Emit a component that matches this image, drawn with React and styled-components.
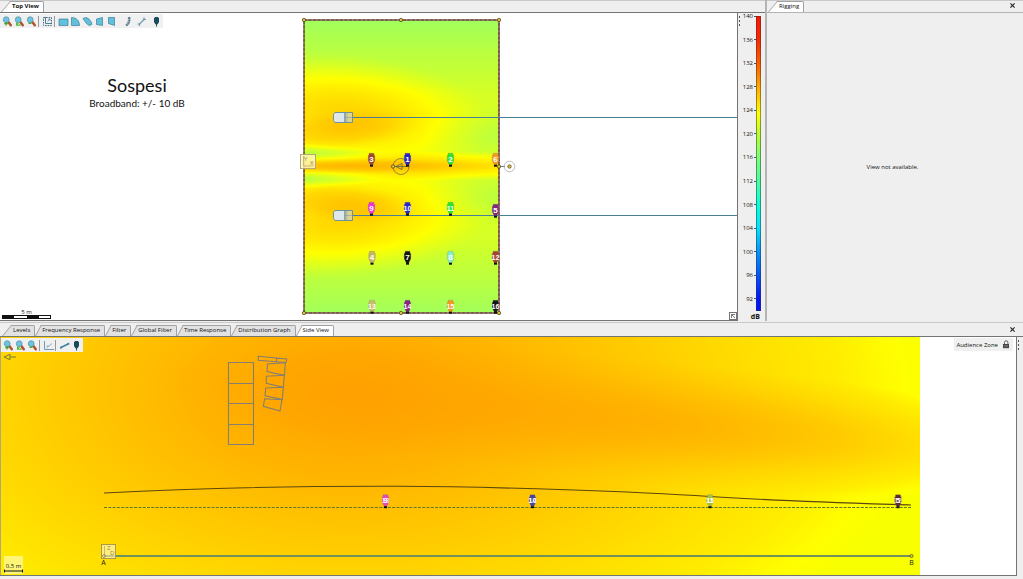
import React from "react";
import styled, { createGlobalStyle, css } from "styled-components";

const GlobalStyle = createGlobalStyle`
  * { box-sizing: border-box; }
  body {
    margin: 0;
    background: #efefef;
    color: #111;
    font-family: "Open Sans", "Noto Sans", sans-serif;
    font-size: 6px;
  }
  button { font: inherit; color: inherit; padding: 0; border: 0; background: none; }
`;

const Page = styled.div`
  display: flex;
  flex-direction: column;
  min-height: 100vh;
`;

const UpperRow = styled.div`
  display: grid;
  grid-template-columns: minmax(0, 1fr) 256px;
`;

const Panel = styled.section`
  display: flex;
  flex-direction: column;
  min-width: 0;
`;

const LeftPanel = styled(Panel)`
  border-right: 2px solid #b4b4b4;
`;

const TabStrip = styled.header`
  display: flex;
  align-items: flex-end;
  height: ${(p) => (p.$tall ? 15 : 13)}px;
  padding-left: ${(p) => (p.$tall ? 2 : 1)}px;
  border-top: 1px solid #c9c9c9;
  border-bottom: ${(p) => (p.$soft ? "1px solid #b4b4b4" : "1px solid #747474")};
  background: #efefef;
`;

const TabButton = styled.button`
  position: relative;
  isolation: isolate;
  height: 11px;
  padding: 0 5px 1px ${(p) => (p.$first ? 11 : 7)}px;
  line-height: 8px;
  white-space: nowrap;
  font-weight: ${(p) => (p.$bold ? 700 : 400)};
  &::before, &::after {
    content: "";
    position: absolute;
    z-index: -1;
    top: 0;
    bottom: 0;
    border-top: 1px solid #a2a2a2;
    background: ${(p) => (p.$active ? "#fff" : "#e2e2e2")};
  }
  &::before {
    left: 0;
    width: 50%;
    border-left: 1px solid #a2a2a2;
    transform: skewX(${(p) => (p.$first ? -40 : -28)}deg);
    transform-origin: left bottom;
  }
  &::after {
    left: 45%;
    right: 0;
    border-right: 1px solid #a2a2a2;
    border-top-right-radius: 2px;
  }
`;

const CloseButton = styled.button`
  display: flex;
  align-items: center;
  justify-content: center;
  width: 11px;
  height: 13px;
  margin: 0 5px 0 auto;
`;

const PlotRow = styled.div`
  display: flex;
  position: relative;
`;

const PlotArea = styled.div`
  position: relative;
  flex: 1;
  min-width: 0;
  background: #fff;
  border-right: 1px solid #747474;
  border-bottom: 1px solid #747474;
`;

const Plot = styled.svg`
  display: block;
  width: 100%;
  height: auto;
  font-family: "Open Sans", "Noto Sans", sans-serif;
`;

const Toolbar = styled.div`
  position: absolute;
  top: 1px;
  left: ${(p) => (p.$inset ? 1 : 0)}px;
  display: flex;
  align-items: center;
  height: 14px;
  padding: 0 1px;
  background: #f0f0f0;
`;

const ToolButton = styled.button`
  display: flex;
  align-items: center;
  justify-content: center;
  width: 12px;
  height: 13px;
  ${(p) => p.$gap && css`margin-left: ${p.$gap}px;`}
`;

const Divider = styled.span`
  width: 1px;
  height: 11px;
  margin: 0 2px 0 1px;
  background: #9a9a9a;
`;

const ScalePanel = styled.aside`
  position: relative;
  display: flex;
  flex-direction: column;
  width: 27px;
`;

const ScaleBody = styled.div`
  display: flex;
  flex: 1;
  min-height: 0;
`;

const ScaleLabels = styled.ul`
  display: flex;
  flex-direction: column;
  justify-content: space-between;
  width: 18px;
  height: calc(100% - 9px);
  margin: 0;
  padding: 0;
  list-style: none;
`;

const ScaleLabel = styled.li`
  display: flex;
  align-items: center;
  justify-content: flex-end;
  gap: 1px;
  height: 6px;
  line-height: 6px;
  &::after {
    content: "";
    width: 2px;
    height: 1px;
    background: #555;
  }
`;

const ScaleBar = styled.div`
  width: 5px;
  margin-top: 3px;
  border: 1px solid rgba(60, 50, 50, 0.5);
  background: linear-gradient(
    #ff1400 0%, #ff2800 8%, #ff6400 17%, #ffaa00 24%, #ffff00 33%,
    #b4ff32 40%, #78ff78 48%, #46ffa0 56%, #00ffe1 65%,
    #00e1ff 72%, #0096ff 80%, #0055ff 88%, #0014ff 96%
  ) border-box;
`;

const ScaleUnit = styled.div`
  height: 10px;
  padding-right: 5px;
  line-height: 11px;
  text-align: right;
  font-size: 7px;
  font-weight: 700;
`;

const Grip = styled.span`
  position: absolute;
  top: 3px;
  left: 1px;
  width: 1px;
  height: 10px;
  background: repeating-linear-gradient(#555 0 2px, transparent 2px 4px);
`;

const Caption = styled.div`
  position: absolute;
  top: 61px;
  left: 57px;
  width: 160px;
  text-align: center;
  color: #111;
  font-family: Lato, "Open Sans", sans-serif;
`;

const CaptionTitle = styled.h1`
  margin: 0;
  font-size: 18px;
  font-weight: 400;
  line-height: 22px;
`;

const CaptionNote = styled.p`
  margin: 0;
  font-size: 10px;
  line-height: 14px;
`;

const ExpandButton = styled.button`
  position: absolute;
  right: 0;
  bottom: 0;
  display: flex;
  align-items: center;
  justify-content: center;
  width: 8px;
  height: 8px;
  border: 1px solid #747474;
  background: #fff;
`;

const EmptyMessage = styled.p`
  display: flex;
  flex: 1;
  align-items: center;
  justify-content: center;
  margin: 0;
  padding-right: 5px;
`;

const LowerPanel = styled(Panel)`
  margin-top: 1px;
`;

const SideRow = styled(PlotRow)`
  padding-right: 6px;
`;

const SideGrip = styled(Grip)`
  left: auto;
  right: 4px;
`;

const ZoneBadge = styled.div`
  position: absolute;
  top: 1px;
  right: 3px;
  display: flex;
  align-items: center;
  gap: 4px;
  height: 13px;
  padding: 0 3px 0 2px;
  background: #f0f0f0;
`;

const LockButton = styled.button`
  display: flex;
  width: 8px;
`;

const Close = () => (
  <CloseButton aria-label="Close">
    <svg width="5" height="5" viewBox="0 0 5 5" stroke="#222" strokeWidth="1.1">
      <path d="M.4 .4 4.6 4.6M4.6 .4 .4 4.6" />
    </svg>
  </CloseButton>
);

const Magnifier = ({ sign }) => (
  <>
    <path d="M6.2 5.800 8.800 9.300" stroke="#b5502a" strokeWidth="2.400" strokeLinecap="round" />
    <circle cx="4.200" cy="3.700" r="2.900" fill="#6cc4e4" stroke="#5d93a3" strokeWidth=".8" />
    {sign === "in" && <path d="M4 6v3.500M2.300 7.700h3.500" stroke="#38a51d" strokeWidth="1.200" />}
    {sign === "fit" && <path d="M2.500 6.500v2.800H6V8M2.500 9 4.500 7" stroke="#57b93a" strokeWidth="1.100" fill="none" />}
    {sign === "out" && <path d="M2.500 7.300h3" stroke="#38a51d" strokeWidth="1.200" />}
  </>
);

const shape = { fill: "#62c0dc", stroke: "#3b7f9b", strokeWidth: 0.7 };
const ICONS = {
  zoomIn: <Magnifier sign="in" />,
  zoomFit: <Magnifier sign="fit" />,
  zoomOut: <Magnifier sign="out" />,
  frame: (
    <g fill="none" stroke="#3f6f8c">
      <rect x="1.500" y="1.500" width="8" height="8" strokeDasharray="1.6 1" />
      <path d="M3.500 1v6.500H10" strokeWidth=".9" />
      <path d="M5.500 5.500 8 3M6.300 3H8v1.700" strokeWidth=".7" />
    </g>
  ),
  rect: <path d="M1 3h9v6.500H1z" {...shape} />,
  sector: <path d="M1.500 1.500c5 0 8 3.500 8 8h-8z" {...shape} />,
  arc: <path d="M1 2.500Q4.500 0 7.500 3.500T9.800 8.500Q7 10.800 4.500 7.500T1 2.500z" {...shape} />,
  trapLeft: <path d="M2.500 3 8.500 1.500v8L2.500 8.500z" {...shape} />,
  trapRight: <path d="M2.500 1.500h6v8L2.500 7.500z" {...shape} />,
  array: (
    <g>
      <path d="M6.800 1C7.300 4.500 6.500 7.500 4 9.500" stroke="#6b8796" strokeWidth="2" fill="none" strokeDasharray="2 .5" />
      <path d="M7.900 1C8.300 5 7.300 8 5 10" stroke="#39596c" strokeWidth=".7" fill="none" />
    </g>
  ),
  measure: (
    <g stroke="#6b9db7" fill="none">
      <path d="M3 8.500 8.500 3" strokeWidth="1.300" />
      <path d="M1.500 8h2v2M8 1.500v2h2" strokeWidth="1.200" />
    </g>
  ),
  line: (
    <g stroke="#427f9d" fill="#427f9d">
      <path d="M2 7.500 9 4" strokeWidth="1.400" />
      <circle cx="2" cy="7.700" r="1.100" stroke="none" />
      <circle cx="9.300" cy="3.800" r="1.100" stroke="none" />
    </g>
  ),
  axes: (
    <g stroke="#6f9db4" fill="none">
      <path d="M1.500 1v8.500H11" />
      <path d="M3.500 8 9 3.500M3.500 6h2" strokeWidth=".8" />
    </g>
  ),
  mic: (
    <g fill="#164c5e">
      <path d="M3.700 1h3.600v1h.7v4L6.600 8.300H4.400L3 6V2h.7z" />
      <path d="M5 8h1v2.500H5z" />
    </g>
  ),
};

const Tool = ({ icon, label, gap }) => (
  <ToolButton aria-label={label} title={label} $gap={gap}>
    <svg width="11" height="11" viewBox="0 0 11 11">{ICONS[icon]}</svg>
  </ToolButton>
);

const ZoomTools = () => (
  <>
    <Tool icon="zoomIn" label="Zoom in" />
    <Tool icon="zoomFit" label="Zoom to fit" />
    <Tool icon="zoomOut" label="Zoom out" />
  </>
);

const MICS = [
  ["3", 371.5, 166, "#a5462b"], ["1", 407.5, 166, "#2727c8"], ["2", 450.5, 166, "#2de52d"], ["6", 495.5, 166, "#f59a1e"],
  ["9", 371.5, 215, "#f034d4"], ["10", 407.5, 215, "#2727c8"], ["11", 450.5, 215, "#2de52d"], ["5", 495.5, 217, "#84257f"],
  ["4", 372, 264, "#c4b568"], ["7", 407.5, 264, "#151515"], ["8", 450.5, 264, "#85f0c4"], ["12", 495.5, 264, "#a5462b"],
  ["13", 372, 313, "#c9bc6c"], ["14", 407.5, 313, "#84257f"], ["15", 450.5, 313, "#f59a1e"], ["16", 495.5, 313, "#151515"],
];

const SIDE_MICS = [
  ["9", 385.5, "#e447b8", "13"],
  ["10", 532.5, "#4b41a0", "14"],
  ["11", 710, "#a5c43a", "15"],
  ["5", 898, "#5d2b35", "12"],
];

const Mic = ({ x, y, fill, label, overlay }) => (
  <g transform={`translate(${x} ${y})`}>
    <path d="M-2.500-12.800h5v2h.8v5.500L1.300-1h-2.600L-3.300-5.300v-5.500h.8z" fill={fill} stroke="#777" strokeOpacity=".4" strokeWidth=".6" />
    <path d="M-1.500-1.300h3v2h-3z" fill="#111" />
    <text y="-4.500" textAnchor="middle" fontFamily="Liberation Sans, sans-serif" fontSize={label.length > 1 ? 7 : 8} fontWeight="700" fill="#fff">{label}</text>
    {overlay && <text y="-4.500" textAnchor="middle" fontFamily="Liberation Sans, sans-serif" fontSize="7" fontWeight="700" fill="#fff" opacity=".7">{overlay}</text>}
  </g>
);

const Handle = ({ x, y }) => <circle cx={x} cy={y} r="1.700" fill="#d8c63a" stroke="#5a4a24" strokeWidth=".8" />;

const Glow = ({ id, cx, cy, rx, ry, turn = 0 }) => (
  <ellipse cx={cx} cy={cy} rx={rx} ry={ry} fill={`url(#${id})`} transform={`rotate(${turn} ${cx} ${cy})`} />
);

const Falloff = ({ id, stops, color = "#fff" }) => (
  <radialGradient id={id}>
    {stops.map(([o, a]) => <stop key={o} offset={o} stopColor={color} stopOpacity={a} />)}
  </radialGradient>
);

// Level fields are painted in grey and mapped to the dB colour scale by a transfer filter.
const TopPlot = () => (
  <Plot viewBox="0 13 737 307" role="img" aria-label="Top view level map">
    <defs>
      <filter id="topScale" x="0" y="0" width="1" height="1" colorInterpolationFilters="sRGB">
        <feComponentTransfer>
          <feFuncR type="table" tableValues=".6 .76 1 1 1" />
          <feFuncG type="table" tableValues="1 1 1 .84 .66" />
          <feFuncB type="table" tableValues=".4 .22 0 0 0" />
        </feComponentTransfer>
      </filter>
      <clipPath id="topClip"><rect x="304" y="20" width="195" height="293" /></clipPath>
      <linearGradient id="topBase" x2="0" y2="1">
        <stop offset="0" stopColor="#0c0c0c" />
        <stop offset=".12" stopColor="#383838" />
        <stop offset=".25" stopColor="#545454" />
        <stop offset=".5" stopColor="#5c5c5c" />
        <stop offset=".75" stopColor="#545454" />
        <stop offset=".88" stopColor="#383838" />
        <stop offset="1" stopColor="#101010" />
      </linearGradient>
      <Falloff id="blob" stops={[[0, 0.64], [0.2, 0.57], [0.4, 0.44], [0.6, 0.28], [0.75, 0.16], [0.88, 0.07], [1, 0]]} />
      <Falloff id="core" stops={[[0, 0.48], [0.5, 0.34], [0.8, 0.1], [1, 0]]} />
      <Falloff id="stripe" stops={[[0, 0.75], [0.4, 0.55], [1, 0]]} />
      <Falloff id="stripeWide" stops={[[0, 0.5], [0.5, 0.38], [1, 0]]} />
      <Falloff id="dip" color="#000" stops={[[0, 0.55], [0.5, 0.32], [0.8, 0.1], [1, 0]]} />
      <Falloff id="dipSoft" color="#000" stops={[[0, 0.36], [0.5, 0.16], [1, 0]]} />
    </defs>
    <g clipPath="url(#topClip)">
      <g filter="url(#topScale)">
        <rect x="304" y="20" width="195" height="293" fill="url(#topBase)" />
        <Glow id="blob" cx={345} cy={114} rx={150} ry={60} turn={5} />
        <Glow id="blob" cx={345} cy={218} rx={150} ry={60} turn={-5} />
        <Glow id="core" cx={345} cy={129} rx={80} ry={20} turn={-6} />
        <Glow id="core" cx={345} cy={203} rx={80} ry={20} turn={6} />
        <Glow id="dip" cx={300} cy={154} rx={105} ry={11} turn={2} />
        <Glow id="dip" cx={300} cy={178} rx={105} ry={11} turn={-2} />
        <Glow id="dipSoft" cx={499} cy={136} rx={80} ry={30} />
        <Glow id="dipSoft" cx={499} cy={197} rx={80} ry={30} />
        <Glow id="stripeWide" cx={420} cy={166} rx={200} ry={15} />
        <Glow id="stripe" cx={350} cy={166} rx={170} ry={8} />
      </g>
    </g>
    <path d="M304 20V313" stroke="#7a3c2c" strokeWidth="1.200" />
    <path d="M304 20H499V313H304" fill="none" stroke="#8c5a55" strokeWidth="1.600" />
    <path d="M304 20H499V313H304z" fill="none" stroke="#4b3030" strokeWidth=".8" strokeDasharray="3 1.500" />
    <path d="M352 117.500H737M352 215.500H737" stroke="#4a7f96" strokeWidth="1.200" />
    {[112, 210].map((y) => (
      <g key={y} stroke="#5b8ca5" strokeWidth=".9">
        <path d={`M335 ${y + 0.5}h10v10h-10l-1.500-2v-6z`} fill="#dfe7ea" />
        <path d={`M345 ${y + 0.5}h7.500v10H345z`} fill="#d3d6c0" fillOpacity=".75" />
        <path d={`M347 ${y + 0.5}v10M345 ${y + 5.5}h7`} strokeWidth=".4" />
      </g>
    ))}
    <g>
      <rect x="300.500" y="154.500" width="15" height="14" fill="#fff6b0" fillOpacity=".85" stroke="#b3a878" />
      <path d="M303.500 156v10h10" fill="none" stroke="#b49f80" strokeWidth=".7" />
      <text x="304" y="161" fontSize="6" fill="#8d8464">Y</text>
      <text x="310" y="165" fontSize="6" fill="#8d8464">X</text>
    </g>
    <g fill="none" stroke="#7d7040" strokeWidth=".8">
      <circle cx="401" cy="166.500" r="8" />
      <path d="M393 166.500h14M402 163.500l-6 3 6 3z" stroke="#4e6a4c" />
      <path d="M499 166.500h6" stroke="#555" />
      <circle cx="509.500" cy="166.500" r="5.300" stroke="#aaa" />
    </g>
    {MICS.map(([label, x, y, fill]) => <Mic key={label} {...{ label, x, y, fill }} />)}
    {[[304, 20], [401, 20], [499, 20], [304, 313], [401, 313], [499, 313], [393, 166.5], [499, 166.5], [509.5, 166.5]].map(([x, y]) => (
      <Handle key={`${x}-${y}`} x={x} y={y} />
    ))}
    <text x="26.500" y="314" fontSize="6" textAnchor="middle" fill="#111">5 m</text>
    <rect x="2.500" y="315.500" width="48" height="3" fill="#fff" stroke="#111" />
    <path d="M2 315h12v4H2zM27 315h12v4H27z" fill="#111" />
  </Plot>
);

const SidePlot = () => (
  <Plot viewBox="0 337 1016 238" role="img" aria-label="Side view level map">
    <defs>
      <filter id="sideScale" x="0" y="0" width="1" height="1" colorInterpolationFilters="sRGB">
        <feComponentTransfer>
          <feFuncR type="table" tableValues=".96 1 1 1 1 1 1 1 1 1 1" />
          <feFuncG type="table" tableValues="1 1 .93 .89 .85 .81 .77 .73 .69 .65 .61" />
          <feFuncB type="table" tableValues="0 0" />
        </feComponentTransfer>
      </filter>
      <clipPath id="sideClip"><rect x="0" y="337" width="920" height="238" /></clipPath>
      <Falloff id="field" stops={[[0, 0.93], [0.12, 0.87], [0.25, 0.76], [0.5, 0.51], [0.75, 0.25], [0.9, 0.1], [1, 0]]} />
      <Falloff id="tongue" stops={[[0, 0.58], [0.2, 0.52], [0.4, 0.41], [0.7, 0.18], [1, 0]]} />
    </defs>
    <g clipPath="url(#sideClip)">
      <g filter="url(#sideScale)">
        <rect x="0" y="337" width="920" height="238" fill="#0a0a0a" />
        <Glow id="field" cx={350} cy={392} rx={590} ry={310} />
        <Glow id="tongue" cx={650} cy={422} rx={500} ry={62} turn={5} />
      </g>
    </g>
    <path d="M.5 337V575" stroke="#b0a878" />
    <g fill="none" stroke="#857f72" strokeWidth="1.100">
      <path d="M228.500 362.500h25v82h-25zM228.500 383.500h25M228.500 403.500h25M228.500 424.500h25" />
      <path d="M258.300 356.300 286.700 359 286 362.500 258.300 360.300zM276.500 358v4" />
      <path d="M267.500 364 285.300 362.700 284.500 375.300 267 371.500z" />
      <path d="M266.300 376.300 284.300 375.300 283.300 387.300 266.300 383.300z" />
      <path d="M265.700 388 283.300 387.300 282.300 399.300 265 395.700z" />
      <path d="M264.700 398.700 282 399.700 280 411 263.300 406.300z" />
    </g>
    <path d="M4 357 10 354.300V359.700zM10 357h6" fill="none" stroke="#7b7d30" />
    <path d="M104 493C180 489 300 486 400 486.300S640 492 710 496.500S850 503 911 505" fill="none" stroke="#5d470c" strokeWidth="1.100" />
    <path d="M104 507.500H911" stroke="#66762a" strokeWidth="1.200" strokeDasharray="3 1.300" />
    <path d="M104 556H911" stroke="#71925a" strokeWidth="1.800" />
    <rect x="101.500" y="544.500" width="14" height="14" fill="#fff6b0" fillOpacity=".7" stroke="#a99a50" />
    <path d="M104.500 546v10h9" fill="none" stroke="#b49f80" strokeWidth=".7" />
    <text x="107" y="550" fontSize="6" fill="#8d8464">Z</text>
    <text x="110" y="555" fontSize="6" fill="#8d8464">D</text>
    <circle cx="104" cy="556" r="1.500" fill="none" stroke="#857a40" strokeWidth=".7" />
    <circle cx="911.500" cy="556" r="1.600" fill="#d8c63a" stroke="#5f5f20" strokeWidth=".8" />
    <text x="103.500" y="565" fontSize="7" textAnchor="middle" fill="#222">A</text>
    <text x="911.500" y="565" fontSize="7" textAnchor="middle" fill="#222">B</text>
    {SIDE_MICS.map(([label, x, fill, overlay]) => (
      <Mic key={label} x={x} y={507.5} fill={fill} label={label} overlay={overlay} />
    ))}
    <rect x="4" y="556" width="19" height="18" fill="#fff9a0" fillOpacity=".75" />
    <text x="13.500" y="568" fontSize="6" textAnchor="middle" fill="#111">0,5 m</text>
    <path d="M5 571h17M4.500 569.500v3M22.500 569.500v3" stroke="#111" />
  </Plot>
);

const LEVELS = [140, 136, 132, 128, 124, 120, 116, 112, 108, 104, 100, 96, 92];
const LOWER_TABS = [
  "Levels", "Frequency Response", "Filter", "Global Filter",
  "Time Response", "Distribution Graph", "Side View",
];

export default function App() {
  return (
    <Page>
      <GlobalStyle />
      <UpperRow>
        <LeftPanel>
          <TabStrip>
            <TabButton $first $active $bold>Top View</TabButton>
          </TabStrip>
          <PlotRow>
            <PlotArea>
              <TopPlot />
              <Toolbar>
                <ZoomTools />
                <Divider />
                <Tool icon="frame" label="Frame view" />
                <Divider />
                <Tool icon="rect" label="Rectangle zone" />
                <Tool icon="sector" label="Sector zone" />
                <Tool icon="arc" label="Arc zone" />
                <Tool icon="trapLeft" label="Left trapezoid zone" />
                <Tool icon="trapRight" label="Right trapezoid zone" />
                <Tool icon="array" label="Add array" gap={4} />
                <Tool icon="measure" label="Measure" gap={2} />
                <Tool icon="mic" label="Add microphone" gap={3} />
              </Toolbar>
              <Caption>
                <CaptionTitle>Sospesi</CaptionTitle>
                <CaptionNote>Broadband: +/- 10 dB</CaptionNote>
              </Caption>
              <ExpandButton aria-label="Expand view">
                <svg width="4" height="4" viewBox="0 0 4 4" fill="none" stroke="#555" strokeWidth=".8">
                  <path d="M.5 4V.5H4M.5 .5 4 4" />
                </svg>
              </ExpandButton>
            </PlotArea>
            <ScalePanel>
              <Grip />
              <ScaleBody>
                <ScaleLabels>
                  {LEVELS.map((level) => <ScaleLabel key={level}>{level}</ScaleLabel>)}
                </ScaleLabels>
                <ScaleBar />
              </ScaleBody>
              <ScaleUnit>dB</ScaleUnit>
            </ScalePanel>
          </PlotRow>
        </LeftPanel>
        <Panel>
          <TabStrip $soft>
            <TabButton $first $active>Rigging</TabButton>
            <Close />
          </TabStrip>
          <EmptyMessage>View not available.</EmptyMessage>
        </Panel>
      </UpperRow>
      <LowerPanel>
        <TabStrip $tall>
          {LOWER_TABS.map((name, i) => (
            <TabButton key={name} $first={i === 0} $active={name === "Side View"}>{name}</TabButton>
          ))}
          <Close />
        </TabStrip>
        <SideRow>
          <PlotArea>
            <SidePlot />
            <Toolbar $inset>
              <ZoomTools />
              <Divider />
              <Tool icon="axes" label="Axes" />
              <Divider />
              <Tool icon="line" label="Line" />
              <Tool icon="mic" label="Add microphone" />
            </Toolbar>
            <ZoneBadge>
              <span>Audience Zone</span>
              <LockButton aria-label="Unlock audience zone">
                <svg width="8" height="9" viewBox="0 0 8 9">
                  <path d="M2.500 4V2.500a1.700 1.700 0 0 1 3.400 0V4" fill="none" stroke="#555" strokeWidth=".9" />
                  <rect x="1" y="4" width="6" height="4.200" fill="#444" />
                  <path d="M2 5.500h4M2 6.800h4" stroke="#999" strokeWidth=".5" />
                </svg>
              </LockButton>
            </ZoneBadge>
          </PlotArea>
          <SideGrip />
        </SideRow>
      </LowerPanel>
    </Page>
  );
}
